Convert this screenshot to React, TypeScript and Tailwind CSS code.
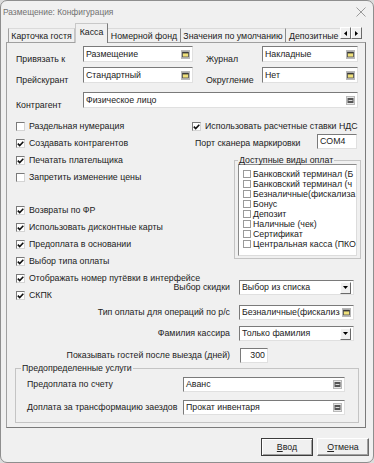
import React from "react";

function Check({ checked }: { checked?: boolean }) {
  return (
    <span className="flex h-[9px] w-[9px] shrink-0 items-center justify-center border border-t-[#7a7a7a] border-l-[#7a7a7a] border-r-[#d4d4d4] border-b-[#d4d4d4] bg-white">
      {checked && (
        <svg width="7" height="6" viewBox="0 0 7 6">
          <path d="M0.8 2.6 L2.7 4.6 L6.3 0.8" fill="none" stroke="#111" strokeWidth="1.6" />
        </svg>
      )}
    </span>
  );
}

function FolderIcon() {
  return (
    <svg width="9" height="9" viewBox="0 0 9 9" className="shrink-0">
      <rect x="0.5" y="0.5" width="8" height="8" fill="#e6e6e6" stroke="#b8b8b8" />
      <rect x="1.5" y="2" width="6" height="5" fill="#efe07a" stroke="#4a4a4a" strokeWidth="0.8" />
      <rect x="1.5" y="2" width="6" height="1.4" fill="#3a3a3a" />
    </svg>
  );
}

function GrayIcon() {
  return (
    <svg width="9" height="9" viewBox="0 0 9 9" className="shrink-0">
      <rect x="0.5" y="0.5" width="8" height="8" fill="#e6e6e6" stroke="#b8b8b8" />
      <rect x="1.5" y="2" width="6" height="5" fill="#555" />
      <rect x="2.5" y="4" width="4" height="1" fill="#d8d8d8" />
    </svg>
  );
}

function DropBtn() {
  return (
    <span className="flex h-[12px] w-[11px] shrink-0 items-center justify-center border border-t-[#fff] border-l-[#fff] border-r-[#6a6a6a] border-b-[#6a6a6a] bg-[#f0f0f0]">
      <svg width="5" height="3" viewBox="0 0 5 3">
        <path d="M0 0 H5 L2.5 3 Z" fill="#000" />
      </svg>
    </span>
  );
}

function Box({ className, children }: { className: string; children?: React.ReactNode }) {
  return (
    <div
      className={`flex shrink-0 items-center justify-between gap-[2px] overflow-hidden whitespace-nowrap border border-t-[#7a7a7a] border-l-[#7a7a7a] border-r-[#e0e0e0] border-b-[#e0e0e0] bg-white pl-[2px] pr-[2px] ${className}`}
    >
      {children}
    </div>
  );
}

function CheckRow({ label, checked }: { label: string; checked?: boolean }) {
  return (
    <div className="flex h-[17px] items-center gap-[4px] whitespace-nowrap">
      <Check checked={checked} />
      <span>{label}</span>
    </div>
  );
}

const payments = [
  "Банковский терминал (Б",
  "Банковский терминал (ч",
  "Безналичные(фискализа",
  "Бонус",
  "Депозит",
  "Наличные (чек)",
  "Сертификат",
  "Центральная касса (ПКО",
];

export default function App() {
  return (
    <div className="h-[463px] w-[374px] bg-[#dcdcdc] font-['Liberation_Sans',Arial,sans-serif] text-[8.8px] leading-[11px] text-[#222]">
      <div className="flex h-full w-full flex-col overflow-hidden rounded-[7px] border border-[#8e8e8e] bg-[#f0f0f0]">
        {/* title */}
        <div className="flex h-[22px] shrink-0 items-center justify-between pl-[2px] pr-[7px]">
          <span className="text-[8.4px] text-[#707070]">Размещение: Конфигурация</span>
          <svg width="10" height="10" viewBox="0 0 10 10">
            <path d="M0.5 0.5 L9.5 9.5 M9.5 0.5 L0.5 9.5" stroke="#9a9a9a" strokeWidth="1" />
          </svg>
        </div>

        {/* tabs */}
        <div className="ml-[7px] flex h-[20px] shrink-0 items-end">
          <div className="flex h-[15px] w-[67px] items-start justify-center overflow-hidden whitespace-nowrap border-l border-t border-r border-l-[#a0a0a0] border-t-[#dadada] border-r-[#c4c4c4] pt-[2px]">
            Карточка гостя
          </div>
          <div className="relative z-10 flex h-[20px] w-[33px] items-start justify-center whitespace-nowrap border-l border-t border-r border-l-[#c8c8c8] border-t-[#c8c8c8] border-r-[#7a7a7a] bg-[#f0f0f0] pt-[3px]">
            Касса
          </div>
          <div className="flex h-[15px] w-[73px] items-start justify-center overflow-hidden whitespace-nowrap border-t border-r border-t-[#dadada] border-r-[#8a8a8a] pt-[2px]">
            Номерной фонд
          </div>
          <div className="flex h-[15px] w-[105px] items-start justify-center overflow-hidden whitespace-nowrap border-t border-r border-t-[#dadada] border-r-[#8a8a8a] pt-[2px]">
            Значения по умолчанию
          </div>
          <div className="flex h-[15px] w-[54px] items-start overflow-hidden whitespace-nowrap border-t border-t-[#dadada] pl-[3px] pt-[2px]">
            Депозитные
          </div>
          <div className="mb-[4px] flex">
            <span className="flex h-[12px] w-[11px] items-center justify-center border border-t-white border-l-white border-r-[#6a6a6a] border-b-[#6a6a6a] bg-[#f0f0f0]">
              <svg width="3" height="5" viewBox="0 0 3 5">
                <path d="M3 0 V5 L0 2.5 Z" fill="#000" />
              </svg>
            </span>
            <span className="flex h-[12px] w-[11px] items-center justify-center border border-t-white border-l-white border-r-[#6a6a6a] border-b-[#6a6a6a] bg-[#f0f0f0]">
              <svg width="3" height="5" viewBox="0 0 3 5">
                <path d="M0 0 V5 L3 2.5 Z" fill="#000" />
              </svg>
            </span>
          </div>
        </div>

        {/* panel */}
        <div className="-mt-px ml-[5px] flex h-[386px] w-[360px] shrink-0 flex-col border border-l-[#a0a0a0] border-t-[#a0a0a0] border-r-[#7a7a7a] border-b-[#7a7a7a]">
          {/* top fields */}
          <div className="ml-[9px] mt-[3px] flex items-start">
            <span className="w-[67px] whitespace-nowrap pt-[5px] leading-[16px]">Привязать к</span>
            <Box className="h-[16px] w-[110px]">
              <span>Размещение</span>
              <FolderIcon />
            </Box>
            <span className="ml-[13px] w-[56px] whitespace-nowrap pt-[5px] leading-[16px]">Журнал</span>
            <Box className="h-[16px] w-[96px]">
              <span>Накладные</span>
              <FolderIcon />
            </Box>
          </div>
          <div className="ml-[9px] flex items-start">
            <span className="w-[67px] whitespace-nowrap pt-[5px] leading-[16px]">Прейскурант</span>
            <Box className="h-[16px] w-[110px]">
              <span>Стандартный</span>
              <FolderIcon />
            </Box>
            <span className="ml-[13px] w-[56px] whitespace-nowrap pt-[5px] leading-[16px]">Округление</span>
            <Box className="h-[16px] w-[96px]">
              <span>Нет</span>
              <FolderIcon />
            </Box>
          </div>
          <div className="ml-[9px] mt-[4px] flex items-start">
            <span className="w-[67px] whitespace-nowrap pt-[5px] leading-[16px]">Контрагент</span>
            <Box className="h-[16px] w-[275px]">
              <span>Физическое лицо</span>
              <GrayIcon />
            </Box>
          </div>

          {/* middle */}
          <div className="ml-[9px] mt-[5px] grid grid-cols-[154px_194px]">
            <div className="flex flex-col">
              <CheckRow label="Раздельная нумерация" />
              <CheckRow label="Создавать контрагентов" checked />
              <CheckRow label="Печатать плательщика" checked />
              <CheckRow label="Запретить изменение цены" />
              <div className="mt-[16px]" />
              <CheckRow label="Возвраты по ФР" checked />
              <CheckRow label="Использовать дисконтные карты" checked />
              <CheckRow label="Предоплата в основании" checked />
              <CheckRow label="Выбор типа оплаты" checked />
              <CheckRow label="Отображать номер путёвки в интерфейсе" checked />
              <CheckRow label="СКПК" checked />
            </div>
            <div className="flex flex-col">
              <div className="ml-[22px]">
                <CheckRow label="Использовать расчетные ставки НДС" checked />
              </div>
              <div className="flex h-[17px] items-center">
                <span className="ml-[25px] w-[122px] whitespace-nowrap">Порт сканера маркировки</span>
                <Box className="mb-[4px] h-[15px] w-[40px]">
                  <span>COM4</span>
                </Box>
              </div>
              <fieldset className="ml-[64px] mt-[2px] w-[127px] border border-[#c4c4c4] pb-[2px] pl-[3px]">
                <legend className="px-[1px] leading-[12px] whitespace-nowrap">Доступные виды оплат</legend>
                <div className="-mt-[2px] flex h-[92px] w-[119px] flex-col overflow-hidden border border-t-[#8a8a8a] border-l-[#8a8a8a] border-r-[#dcdcdc] border-b-[#dcdcdc] bg-white pl-[4px] pt-[4px]">
                  {payments.map((p) => (
                    <div key={p} className="flex h-[10px] shrink-0 items-center gap-[2px] whitespace-nowrap leading-[10px]">
                      <span className="h-[8px] w-[8px] shrink-0 border border-[#9a9a9a] bg-white" />
                      <span>{p}</span>
                    </div>
                  ))}
                </div>
              </fieldset>
              <div className="mt-[21px] flex items-center">
                <div className="flex w-[60px] justify-end">
                  <span className="shrink-0 whitespace-nowrap">Выбор скидки</span>
                </div>
                <Box className="ml-[9px] h-[15px] w-[115px] pr-[1px]">
                  <span>Выбор из списка</span>
                  <DropBtn />
                </Box>
              </div>
            </div>
          </div>

          {/* right aligned rows */}
          <div className="mt-[1px] flex items-center">
            <div className="flex w-[223px] justify-end">
              <span className="shrink-0 whitespace-nowrap">Тип оплаты для операций по р/с</span>
            </div>
            <Box className="ml-[9px] h-[15px] w-[115px]">
              <span className="min-w-0 overflow-hidden">Безналичные(фискализа</span>
              <FolderIcon />
            </Box>
          </div>
          <div className="mt-[6px] flex items-center">
            <div className="flex w-[223px] justify-end">
              <span className="shrink-0 whitespace-nowrap">Фамилия кассира</span>
            </div>
            <Box className="ml-[9px] h-[15px] w-[115px] pr-[1px]">
              <span>Только фамилия</span>
              <DropBtn />
            </Box>
          </div>
          <div className="mt-[7px] flex items-center">
            <div className="flex w-[223px] justify-end">
              <span className="shrink-0 whitespace-nowrap">Показывать гостей после выезда (дней)</span>
            </div>
            <Box className="ml-[10px] h-[15px] w-[28px] justify-end">
              <span className="ml-auto">300</span>
            </Box>
          </div>

          {/* predefined services */}
          <fieldset className="-mt-[1px] ml-[8px] w-[344px] border border-[#c4c4c4] pb-[7px] pl-[5px]">
            <legend className="px-[1px] leading-[12px] whitespace-nowrap">Предопределенные услуги</legend>
            <div className="ml-[6px] mt-[3px] flex items-center">
              <span className="w-[156px] whitespace-nowrap">Предоплата по счету</span>
              <Box className="h-[15px] w-[162px]">
                <span>Аванс</span>
                <GrayIcon />
              </Box>
            </div>
            <div className="ml-[6px] mt-[8px] flex items-center">
              <span className="w-[156px] whitespace-nowrap">Доплата за трансформацию заездов</span>
              <Box className="h-[15px] w-[162px]">
                <span>Прокат инвентаря</span>
                <GrayIcon />
              </Box>
            </div>
          </fieldset>
        </div>

        {/* buttons */}
        <div className="mr-[4px] mt-[10px] flex justify-end gap-[4px]">
          <button className="flex h-[18px] w-[52px] items-center justify-center border border-[#3c3c3c] bg-[#f0f0f0] shadow-[inset_1px_1px_0_#fff,inset_-1px_-1px_0_#a0a0a0]">
            <span>
              <span className="underline">В</span>вод
            </span>
          </button>
          <button className="flex h-[18px] w-[52px] items-center justify-center border border-t-white border-l-white border-r-[#6a6a6a] border-b-[#6a6a6a] bg-[#f0f0f0] shadow-[inset_-1px_-1px_0_#a0a0a0]">
            <span>
              <span className="underline">О</span>тмена
            </span>
          </button>
        </div>
      </div>
    </div>
  );
}
